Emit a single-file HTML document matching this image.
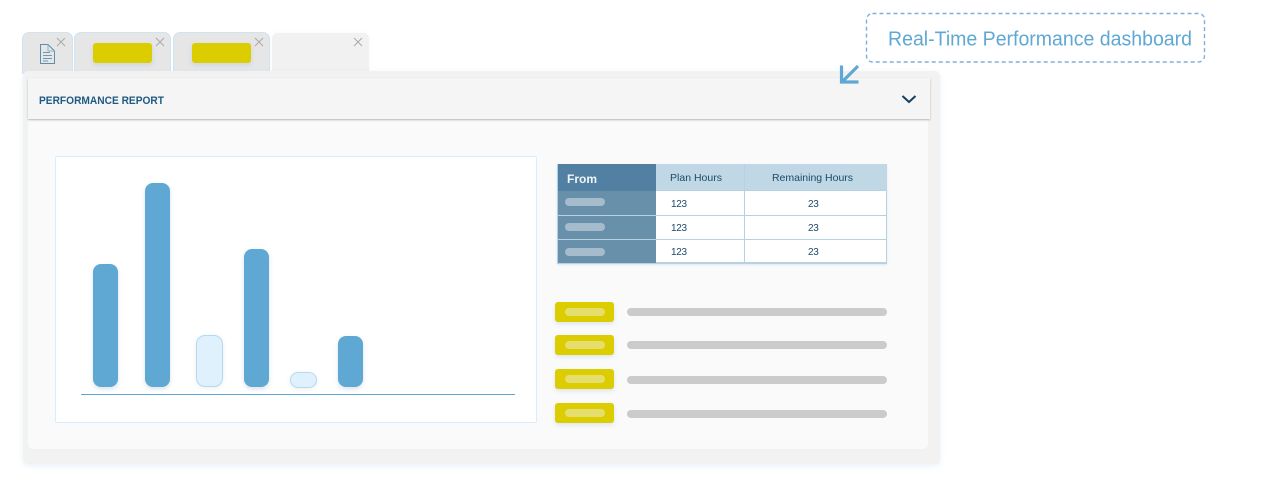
<!DOCTYPE html>
<html><head><meta charset="utf-8">
<style>
html,body{margin:0;padding:0;background:#fff}
body{width:1267px;height:483px;position:relative;overflow:hidden;font-family:"Liberation Sans",sans-serif}
.a{position:absolute;box-sizing:border-box}
.tab{top:32px;height:42px;background:#e6e6e6;border:1px solid #cfe3f1;border-bottom:0;border-radius:7px 7px 0 0}
.y{background:#dccd00;border-radius:3px;box-shadow:0 2px 5px rgba(90,140,190,.18)}
.p{background:#e6de6c;border-radius:4px;height:8px;width:40px;left:565px}
.g{background:#cbcbcb;border-radius:4px;height:8px;left:627px;width:260px}
.b{background:#5ea8d3;border-radius:8px;box-shadow:0 2px 5px rgba(70,110,140,.2);width:25px}
.l{background:#dff1fd;border:1px solid #b5d9ef;border-radius:9px;box-shadow:0 1px 4px rgba(70,110,140,.12)}
.t{font-size:10.500px;color:#1c4a68;white-space:nowrap;text-align:center}
.n{font-size:10px;color:#1c4a68;white-space:nowrap;letter-spacing:-.3px;line-height:13px}
.w{position:absolute;background:#a4bccc;border-radius:4px;height:8px;width:40px;left:565px}
</style></head><body>

<div class="a tab" style="left:22px;width:51px"></div>
<div class="a tab" style="left:74px;width:97px"></div>
<div class="a tab" style="left:173px;width:97px"></div>
<div class="a" style="left:272px;top:33px;width:97px;height:40px;background:#f1f1f1;border-radius:6px 6px 0 0;box-shadow:0 0 4px rgba(200,215,230,.2)"></div>

<svg class="a" style="left:0;top:0" width="400" height="70" fill="none">
<path d="M40.500 44.500H48L54.500 51V63.500H40.500Z" stroke="#5b8fad" stroke-width="1"/>
<path d="M48 44.500V51H54.500" stroke="#8fb2c8" stroke-width="1"/>
<path d="M43 52.500H50M43 55.500H52M43 58.500H52M43 61H48" stroke="#6d99b4" stroke-width="1"/>
<g stroke="#a9a9a9" stroke-width="1">
<path d="M57 38L65 46M65 38L57 46"/>
<path d="M156 38L164 46M164 38L156 46"/>
<path d="M255 38L263 46M263 38L255 46"/>
<path d="M354 38L362 46M362 38L354 46"/>
</g>
</svg>

<div class="a y" style="left:93px;top:43px;width:59px;height:20px"></div>
<div class="a y" style="left:192px;top:43px;width:59px;height:20px"></div>

<div class="a" style="left:23px;top:71px;width:917px;height:393px;background:#f2f2f2;border-radius:5px;box-shadow:0 2px 6px rgba(200,222,243,.4)"></div>
<div class="a" style="left:28px;top:120px;width:900px;height:329px;background:#fafafa;border-radius:0 0 5px 5px"></div>
<div class="a" style="left:28px;top:78px;width:902px;height:41px;background:#f5f5f5;box-shadow:0 1px 2px rgba(0,0,0,.25)"></div>
<svg class="a" style="left:30px;top:90px" width="150" height="20">
<text x="9" y="14" font-family="Liberation Sans, sans-serif" font-size="11" font-weight="bold" fill="#1f5a82" textLength="125" lengthAdjust="spacingAndGlyphs">PERFORMANCE REPORT</text>
</svg>

<svg class="a" style="left:830px;top:55px" width="100" height="60" fill="none">
<path d="M72.500 41L79 47L85.500 41" stroke="#15405f" stroke-width="2"/>
<path d="M28 11L12.500 26.500M11.500 10.500V27H28.500" stroke="#5ea8d3" stroke-width="3.200"/>
</svg>

<svg class="a" style="left:860px;top:8px" width="352" height="60" fill="none">
<rect x="6.500" y="5.500" width="338" height="48.500" rx="6" stroke="#82add6" stroke-width="1.400" stroke-dasharray="4 3"/>
</svg>
<svg class="a" style="left:880px;top:24px" width="320" height="30">
<text x="8" y="21.500" font-family="Liberation Sans, sans-serif" font-size="20" fill="#5ea8d3" textLength="304" lengthAdjust="spacingAndGlyphs">Real-Time Performance dashboard</text>
</svg>

<div class="a" style="left:55px;top:156px;width:482px;height:267px;background:#fff;border:1px solid #d8eefb;border-radius:2px"></div>
<div class="a b" style="left:93px;top:264px;height:123px"></div>
<div class="a b" style="left:145px;top:183px;height:204px"></div>
<div class="a l" style="left:196px;top:335px;width:27px;height:52px"></div>
<div class="a b" style="left:244px;top:249px;height:138px"></div>
<div class="a l" style="left:290px;top:372px;width:27px;height:16px;border-radius:8px"></div>
<div class="a b" style="left:338px;top:336px;height:51px"></div>
<div class="a" style="left:81px;top:394px;width:434px;height:1px;background:#5ea8d3"></div>

<div class="a" style="left:557px;top:164px;width:330px;height:100px;background:#b5d1e2;box-shadow:0 1px 2px rgba(150,190,215,.3)"></div>
<div class="a" style="left:558px;top:164px;width:98px;height:27px;background:#5180a3"></div>
<div class="a" style="left:656px;top:164px;width:88px;height:26px;background:#c0d7e6"></div>
<div class="a" style="left:745px;top:164px;width:142px;height:26px;background:#c0d7e6"></div>
<div class="a" style="left:558px;top:191px;width:98px;height:24px;background:#6890ab"></div>
<div class="a" style="left:558px;top:216px;width:98px;height:23px;background:#6890ab"></div>
<div class="a" style="left:558px;top:240px;width:98px;height:23px;background:#6890ab"></div>
<div class="a" style="left:656px;top:191px;width:88px;height:24px;background:#fff"></div>
<div class="a" style="left:745px;top:191px;width:141px;height:24px;background:#fff"></div>
<div class="a" style="left:656px;top:216px;width:88px;height:23px;background:#fff"></div>
<div class="a" style="left:745px;top:216px;width:141px;height:23px;background:#fff"></div>
<div class="a" style="left:656px;top:240px;width:88px;height:22px;background:#fff"></div>
<div class="a" style="left:745px;top:240px;width:141px;height:22px;background:#fff"></div>
<div class="w" style="top:198px"></div>
<div class="w" style="top:223px"></div>
<div class="w" style="top:248px"></div>
<div class="a" style="left:567px;top:172px;font-size:12px;line-height:14px;font-weight:bold;color:#f0f5f8">From</div>
<div class="a t" style="left:656px;top:172px;width:80px;line-height:13px">Plan Hours</div>
<div class="a t" style="left:745px;top:172px;width:135px;line-height:13px">Remaining Hours</div>
<div class="a n" style="left:671px;top:198px">123</div>
<div class="a n" style="left:671px;top:222px">123</div>
<div class="a n" style="left:671px;top:246px">123</div>
<div class="a n" style="left:808px;top:198px">23</div>
<div class="a n" style="left:808px;top:222px">23</div>
<div class="a n" style="left:808px;top:246px">23</div>

<div class="a y" style="left:555px;top:302px;width:59px;height:20px"></div>
<div class="a y" style="left:555px;top:335px;width:59px;height:20px"></div>
<div class="a y" style="left:555px;top:369px;width:59px;height:20px"></div>
<div class="a y" style="left:555px;top:403px;width:59px;height:20px"></div>
<div class="a p" style="top:308px"></div>
<div class="a p" style="top:341px"></div>
<div class="a p" style="top:375px"></div>
<div class="a p" style="top:409px"></div>
<div class="a g" style="top:308px"></div>
<div class="a g" style="top:341px"></div>
<div class="a g" style="top:376px"></div>
<div class="a g" style="top:410px"></div>
</body></html>
